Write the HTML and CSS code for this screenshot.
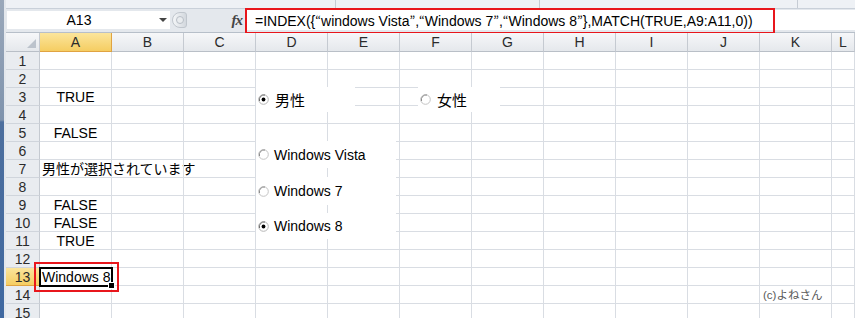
FILE: index.html
```html
<!DOCTYPE html>
<html lang="ja">
<head>
    <meta charset="UTF-8">
    <title>オプションボタン INDEX MATCH</title>
    <link rel="stylesheet" href="styles.css">
</head>
<body>
<div class="window">
    <div class="frame-edge"></div>
    <div class="app">
        <div class="ribbon-tail">
            <span class="tail-group" style="width: 329px;"></span>
            <span class="tail-group" style="width: 203px;"></span>
            <span class="tail-group" style="width: 257px;"></span>
            <span class="tail-group"></span>
        </div>

        <div class="formula-bar">
            <div class="name-box">
                <span class="name-text">A13</span>
                <span class="caret"></span>
            </div>
            <div class="splitter"><span></span></div>
            <div class="fx">fx</div>
            <div class="formula">
                <div class="formula-text">=INDEX({<q>“</q>windows Vista<q>”</q>,<q>“</q>Windows 7<q>”</q>,<q>“</q>Windows 8<q>”</q>},MATCH(TRUE,A9:A11,0))</div>
            </div>
        </div>

        <div class="sheet">
            <div class="grid" id="grid"></div>

            <!-- フォームコントロール -->
            <div class="opt" style="left: 250px; top: 54px; width: 99px; height: 25px;">
                <svg class="radio" viewBox="0 0 11 11"><circle cx="5.5" cy="5.5" r="4.8" fill="#fff" stroke="#b5b5b5"/><path d="M1.5 7 A4.8 4.8 0 0 1 7 1" fill="none" stroke="#6e6e6e"/><circle cx="5.5" cy="5.5" r="1.9" fill="#000"/></svg>
                <span class="opt-label">男性</span>
            </div>
            <div class="opt" style="left: 412px; top: 54px; width: 82px; height: 25px;">
                <svg class="radio" viewBox="0 0 11 11"><circle cx="5.5" cy="5.5" r="4.8" fill="#fff" stroke="#c4c4c4"/><path d="M1.5 7 A4.8 4.8 0 0 1 7 1" fill="none" stroke="#8a8a8a"/></svg>
                <span class="opt-label">女性</span>
            </div>
            <div class="opt" style="left: 250px; top: 108px; width: 140px; height: 27px;">
                <svg class="radio" viewBox="0 0 11 11"><circle cx="5.5" cy="5.5" r="4.8" fill="#fff" stroke="#c4c4c4"/><path d="M1.5 7 A4.8 4.8 0 0 1 7 1" fill="none" stroke="#8a8a8a"/></svg>
                <span class="opt-label latin">Windows Vista</span>
            </div>
            <div class="opt" style="left: 250px; top: 144px; width: 140px; height: 28px;">
                <svg class="radio" viewBox="0 0 11 11"><circle cx="5.5" cy="5.5" r="4.8" fill="#fff" stroke="#c4c4c4"/><path d="M1.5 7 A4.8 4.8 0 0 1 7 1" fill="none" stroke="#8a8a8a"/></svg>
                <span class="opt-label latin">Windows 7</span>
            </div>
            <div class="opt" style="left: 250px; top: 180px; width: 140px; height: 26px;">
                <svg class="radio" viewBox="0 0 11 11"><circle cx="5.5" cy="5.5" r="4.8" fill="#fff" stroke="#b5b5b5"/><path d="M1.5 7 A4.8 4.8 0 0 1 7 1" fill="none" stroke="#6e6e6e"/><circle cx="5.5" cy="5.5" r="1.9" fill="#000"/></svg>
                <span class="opt-label latin">Windows 8</span>
            </div>

            <!-- 注目枠 -->
            <div class="mark"></div>
        </div>
    </div>
</div>

<script>
// セルの値 (行, 列)
let values = {
    '3,A': ['TRUE', 'c'],
    '5,A': ['FALSE', 'c'],
    '7,A': ['男性が選択されています', 'l'],
    '9,A': ['FALSE', 'c'],
    '10,A': ['FALSE', 'c'],
    '11,A': ['TRUE', 'c'],
    '13,A': ['Windows 8', 'l'],
    '14,K': ['(c)よねさん', 'note']
};
let cols = ['A','B','C','D','E','F','G','H','I','J','K','L'];
let grid = document.getElementById('grid');

function add_cell(cls, text) {
    let d = document.createElement('div');
    d.className = cls;
    if (text) d.textContent = text;
    grid.appendChild(d);
    return d;
}

add_cell('corner', '');
cols.forEach(function (c) {
    add_cell(c === 'A' ? 'col-head active' : 'col-head', c);
});
for (let r = 1; r <= 15; r++) {
    add_cell(r === 13 ? 'row-head active' : 'row-head', String(r));
    cols.forEach(function (c) {
        let v = values[r + ',' + c];
        let cls = 'cell';
        if (v) cls += ' align-' + v[1];
        if (r === 13 && c === 'A') cls += ' selected';
        add_cell(cls, v ? v[0] : '');
    });
}
</script>
</body>
</html>
```

FILE: styles.css
```css
body, html{
    margin: 0;
    padding: 0;
    width: 100%;
    height: 100%;
    overflow: hidden;
    background: #fff;
    font-family: "Liberation Sans", "Noto Sans CJK JP", sans-serif;
}
.window{
    display: flex;
    height: 100%;
}
.frame-edge{
    width: 4px;
    flex: none;
    background: linear-gradient(to bottom, #9aa8ba 0, #7f93ad 120px, #4d6f9e 122px, #3f68a0 100%);
    border-right: 2px solid #e3e7ec;
}
.app{
    flex: 1;
    display: flex;
    flex-direction: column;
    min-width: 0;
}

/* リボンの下端 */
.ribbon-tail{
    flex: none;
    height: 8px;
    background: #eef1f5;
    border-bottom: 1px solid #c9d0d9;
    display: flex;
    overflow: hidden;
}
.tail-group{
    flex: none;
    border-right: 1px solid #c6ccd4;
}
.tail-group:last-child{
    flex: 1;
    border-right: none;
}

/* 数式バー */
.formula-bar{
    flex: none;
    height: 24px;
    display: flex;
    align-items: stretch;
    background: #e4e8ed;
    border-bottom: 1px solid #b7bfc9;
    box-sizing: border-box;
}
.name-box{
    width: 163px;
    margin: 2px 0 3px 1px;
    background: #fff;
    display: flex;
    align-items: center;
}
.name-text{
    flex: 1;
    text-align: center;
    font-size: 14px;
    color: #000;
    padding-right: 8px;
}
.caret{
    width: 0;
    height: 0;
    border-left: 4px solid transparent;
    border-right: 4px solid transparent;
    border-top: 4px solid #444;
    margin-right: 3px;
}
.splitter{
    width: 13px;
    margin: 3px 0 4px 2px;
    border-radius: 8px 3px 3px 8px;
    background: linear-gradient(to right, #f4f6f8, #d3d8de);
    border: 1px solid #c0c6cd;
    display: flex;
    align-items: center;
    justify-content: center;
}
.splitter span{
    width: 8px;
    height: 8px;
    border-radius: 50%;
    background: #e9ecef;
    border: 1px solid #b8bec6;
    box-sizing: border-box;
}
.fx{
    width: 58px;
    text-align: right;
    padding-right: 3px;
    box-sizing: border-box;
    font-family: "Liberation Serif", serif;
    font-style: italic;
    font-weight: bold;
    font-size: 15px;
    line-height: 22px;
    color: #444;
    letter-spacing: -1px;
}
.formula{
    flex: 1;
    background: #fff;
    margin: 1px 0 2px 0;
    display: flex;
}
.formula-text{
    width: 530px;
    box-sizing: border-box;
    border: 2px solid #e8161c;
    margin: -2px 0 -4px 0;
    padding: 2px 0 0 8px;
    font-size: 14px;
    line-height: 18px;
    white-space: nowrap;
    color: #000;
}
.formula-text q{
    quotes: none;
    font-family: "Noto Sans CJK JP", sans-serif;
    font-size: 12px;
}

/* シート */
.sheet{
    position: relative;
    flex: none;
}
.grid{
    display: grid;
    grid-template-columns: 34px repeat(11, 72px) 1fr;
    grid-template-rows: 19px repeat(15, 18px);
    background: #fff;
}
.corner, .col-head, .row-head{
    box-sizing: border-box;
    background: linear-gradient(to bottom, #f6f7f9, #e5e8ec);
    border-right: 1px solid #c5cad1;
    border-bottom: 1px solid #b9bfc7;
    color: #2b2b2b;
    font-size: 14px;
    text-align: center;
    line-height: 18px;
}
.corner{
    position: relative;
}
.corner::after{
    content: "";
    position: absolute;
    right: 3px;
    bottom: 3px;
    border-left: 9px solid transparent;
    border-bottom: 9px solid #bcc3cc;
}
.row-head{
    background: #e9ecf0;
    border-bottom: 1px solid #d0d5dc;
    line-height: 18px;
}
.col-head.active, .row-head.active{
    background: linear-gradient(to bottom, #fbe59c, #f5cd62);
    border-right-color: #e0a341;
    border-bottom-color: #e0a341;
}
.cell{
    box-sizing: border-box;
    border-right: 1px solid #d9dde3;
    border-bottom: 1px solid #d9dde3;
    font-size: 14px;
    line-height: 18px;
    white-space: nowrap;
    color: #000;
    padding: 0 2px;
}
.align-c{
    text-align: center;
}
.align-note{
    font-size: 11.5px;
    color: #5a5a5a;
    padding-left: 3px;
}
.cell.selected{
    outline: 2px solid #000;
    outline-offset: -1px;
    position: relative;
}
.cell.selected::after{
    content: "";
    position: absolute;
    right: -4px;
    bottom: -4px;
    width: 5px;
    height: 5px;
    background: #000;
    border: 1px solid #fff;
}

/* オプションボタン */
.opt{
    position: absolute;
    background: #fff;
    display: flex;
    align-items: center;
    padding-left: 2px;
    box-sizing: border-box;
}
.radio{
    width: 11px;
    height: 11px;
    flex: none;
}
.opt-label{
    font-size: 15px;
    margin-left: 6px;
    color: #000;
}
.opt-label.latin{
    font-size: 14px;
    margin-left: 5px;
}
.mark{
    position: absolute;
    left: 28px;
    top: 229px;
    width: 85px;
    height: 30px;
    box-sizing: border-box;
    border: 2px solid #e8161c;
}
```
